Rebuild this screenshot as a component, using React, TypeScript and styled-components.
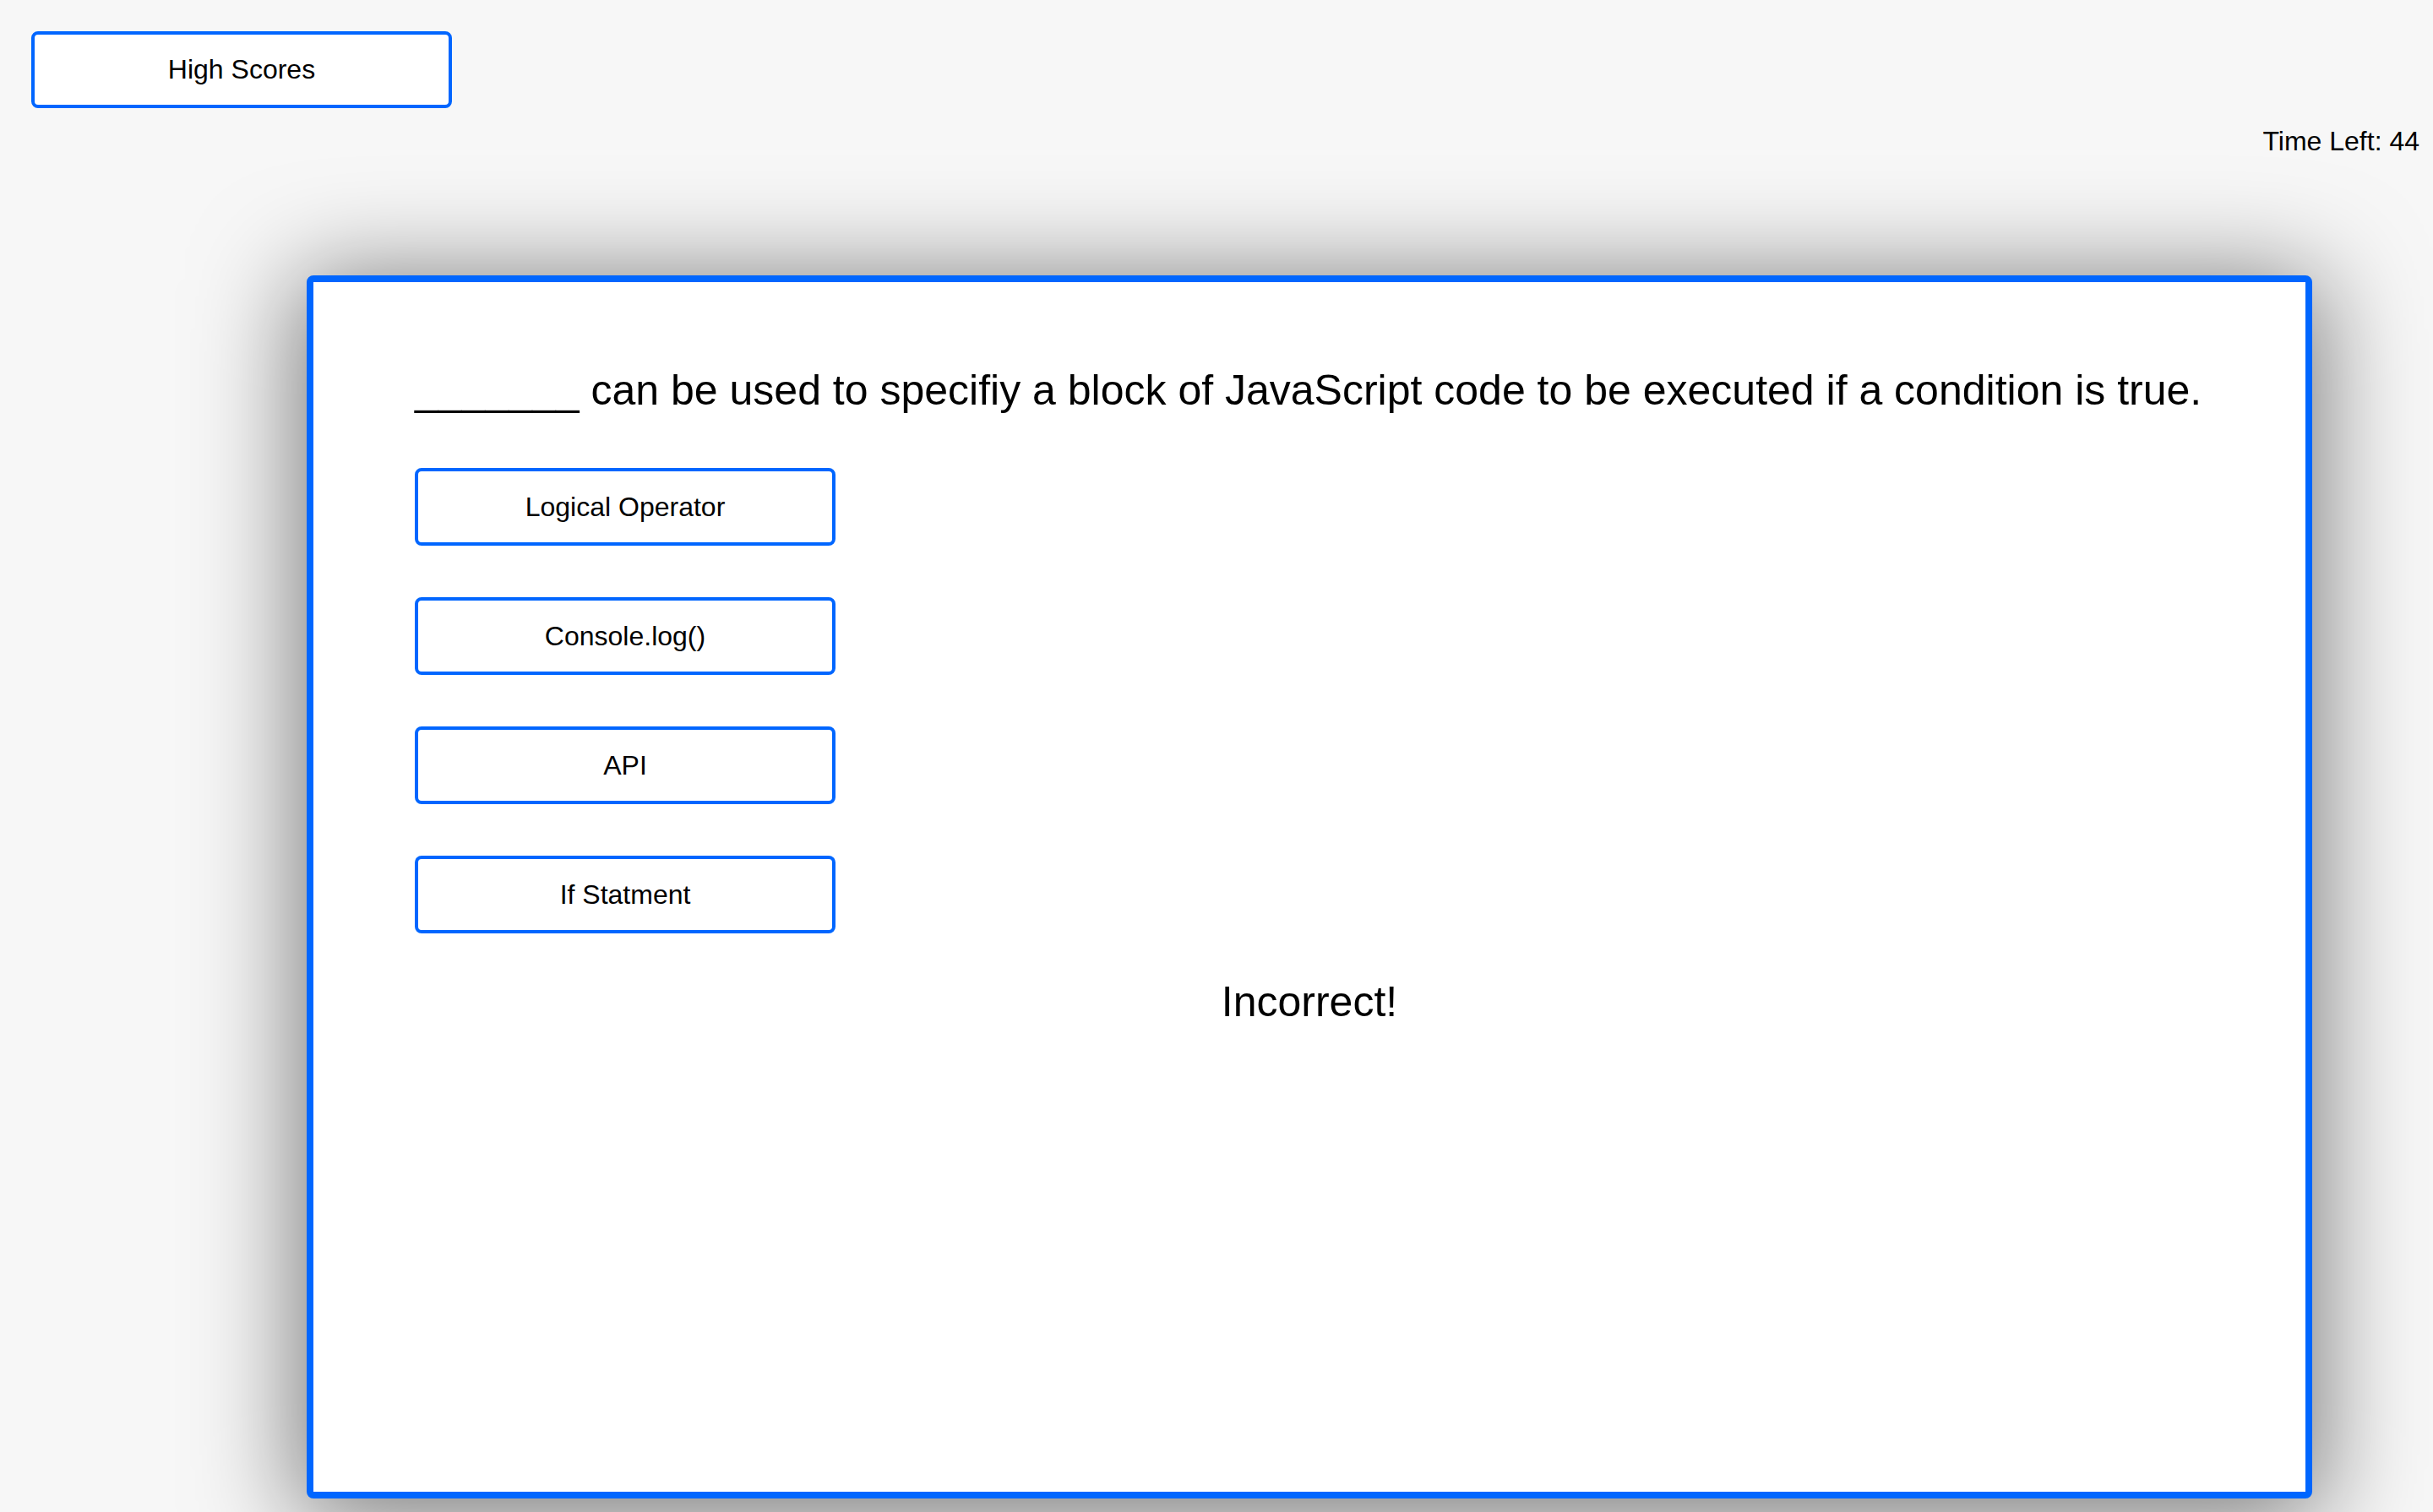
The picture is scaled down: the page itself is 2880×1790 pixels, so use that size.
import React from "react";
import styled, { createGlobalStyle } from "styled-components";

const GlobalStyle = createGlobalStyle`
  html, body {
    margin: 0;
    padding: 0;
  }
  body {
    background: #f7f7f7;
    font-family: "Liberation Sans", Arial, Helvetica, sans-serif;
    color: #000;
    min-height: 1790px;
    overflow: hidden;
  }
`;

const Page = styled.div`
  padding: 37px 16px 0 0;
`;

const Header = styled.header`
  display: flex;
  flex-direction: column;
`;

const BlueButton = styled.button`
  box-sizing: border-box;
  width: 498px;
  height: 92px;
  background: #ffffff;
  border: 4px solid #0066ff;
  border-radius: 8px;
  font-family: "Liberation Sans", Arial, Helvetica, sans-serif;
  font-size: 32px;
  color: #000;
  padding: 0;
  cursor: pointer;
`;

const HighScoresButton = styled(BlueButton)`
  margin-left: 37px;
  height: 91px;
`;

const Timer = styled.div`
  align-self: flex-end;
  margin-top: 21px;
  font-size: 32px;
  line-height: 37px;
`;

const Card = styled.main`
  box-sizing: border-box;
  margin: 140px 0 0 363px;
  width: 2374px;
  height: 1448px;
  background: #ffffff;
  border: 8px solid #0066ff;
  border-radius: 8px;
  box-shadow: 0 14px 120px 12px rgba(0, 0, 0, 0.5);
  padding: 100px 117px 0 120px;
  display: flex;
  flex-direction: column;
`;

const Question = styled.h2`
  margin: 0;
  font-size: 50px;
  font-weight: normal;
  line-height: 57px;
`;

const Choices = styled.div`
  margin-top: 63px;
  display: flex;
  flex-direction: column;
  gap: 61px;
`;

const Feedback = styled.p`
  margin: 53px -117px 0 -120px;
  font-size: 50px;
  line-height: 57px;
  text-align: center;
`;

const choices = ["Logical Operator", "Console.log()", "API", "If Statment"];

export default function App() {
  return (
    <>
      <GlobalStyle />
      <Page>
        <Header>
          <HighScoresButton>High Scores</HighScoresButton>
          <Timer>Time Left: 44</Timer>
        </Header>
        <Card>
          <Question>
            _______ can be used to specifiy a block of JavaScript code to be executed if a condition is true.
          </Question>
          <Choices>
            {choices.map((c) => (
              <BlueButton key={c}>{c}</BlueButton>
            ))}
          </Choices>
          <Feedback>Incorrect!</Feedback>
        </Card>
      </Page>
    </>
  );
}
